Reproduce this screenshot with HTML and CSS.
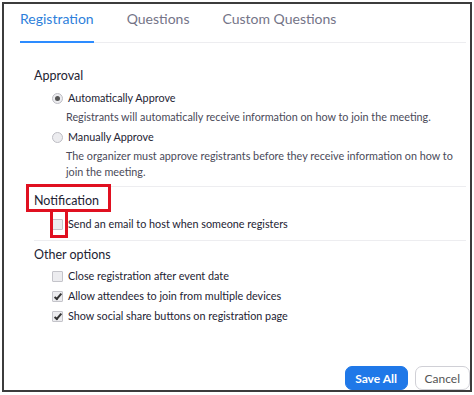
FILE: index.html
```html
<!DOCTYPE html>
<html>
<head>
<meta charset="utf-8">
<link rel="stylesheet" href="styles.css">
</head>
<body>
<div class="frame">
  <div class="tabs">
    <div class="tab active">Registration</div>
    <div class="tab">Questions</div>
    <div class="tab">Custom Questions</div>
  </div>
  <div class="content">
    <div class="group">
      <div class="group-title">Approval</div>
      <div class="option"><span class="radio checked"></span><span>Automatically Approve</span></div>
      <div class="desc">Registrants will automatically receive information on how to join the meeting.</div>
      <div class="option spaced"><span class="radio"></span><span>Manually Approve</span></div>
      <div class="desc">The organizer must approve registrants before they receive information on how to join the meeting.</div>
    </div>
    <div class="group">
      <div class="group-title">Notification</div>
      <div class="option"><span class="check"></span><span>Send an email to host when someone registers</span></div>
    </div>
    <div class="group last">
      <div class="group-title">Other options</div>
      <div class="option"><span class="check"></span><span>Close registration after event date</span></div>
      <div class="option"><span class="check checked"></span><span>Allow attendees to join from multiple devices</span></div>
      <div class="option"><span class="check checked"></span><span>Show social share buttons on registration page</span></div>
    </div>
  </div>
  <div class="footer">
    <button class="btn primary">Save All</button>
    <button class="btn">Cancel</button>
  </div>
  <div class="mark mark-title"></div>
  <div class="mark mark-box"></div>
</div>
</body>
</html>
```
FILE: styles.css
```css
html, body {
  margin: 0;
  padding: 0;
  background: #fff;
}
body {
  font-family: Lato, "Open Sans", sans-serif;
  color: #232333;
}
.frame {
  position: relative;
  box-sizing: border-box;
  margin: 2px 0 0 2px;
  width: 470px;
  height: 390px;
  border: 2px solid #3c3c3c;
  display: flex;
  flex-direction: column;
}
.tabs {
  display: flex;
  margin: 0 4px 0 16px;
  border-bottom: 1px solid #ededf0;
  height: 39px;
  box-sizing: border-box;
}
.tab {
  font-size: 14px;
  color: #747487;
  margin-right: 33px;
  padding-top: 4px;
  box-sizing: border-box;
  height: 39px;
  line-height: 22px;
}
.tab.active {
  color: #2e7fdb;
  border-bottom: 2px solid #2d8cff;
}
.content {
  padding: 0 4px 0 30px;
  margin-top: 24px;
}
.group {
  border-bottom: 1px solid #ededf0;
  padding-bottom: 6px;
  margin-bottom: 5px;
}
.group.last {
  border-bottom: none;
}
.group-title {
  font-size: 12.5px;
  line-height: 18px;
  margin-bottom: 4px;
}
.group:first-child .group-title {
  margin-bottom: 3px;
}
.group.last .group-title {
  margin-bottom: 2px;
}
.option {
  display: flex;
  align-items: center;
  font-size: 10.8px;
  line-height: 20px;
  padding-left: 18px;
}
.option.spaced {
  margin-top: 2px;
}
.desc {
  font-size: 10.8px;
  line-height: 16px;
  color: #4a4a59;
  padding-left: 32px;
  padding-top: 1px;
}
.radio {
  width: 9px;
  height: 9px;
  border-radius: 50%;
  border: 1px solid #bdbdc4;
  background: #ececef;
  margin-right: 5px;
  position: relative;
  flex: none;
}
.radio.checked::after {
  content: "";
  position: absolute;
  left: 2px;
  top: 2px;
  width: 5px;
  height: 5px;
  border-radius: 50%;
  background: #555;
}
.check {
  width: 9px;
  height: 9px;
  border: 1px solid #c4c4ca;
  background: #ececef;
  border-radius: 1px;
  margin-right: 5px;
  position: relative;
  flex: none;
}
.check.checked::after {
  content: "";
  position: absolute;
  left: 3px;
  top: 0px;
  width: 2px;
  height: 6px;
  border: solid #333;
  border-width: 0 2px 2px 0;
  transform: rotate(40deg);
}
.footer {
  margin-top: auto;
  display: flex;
  justify-content: flex-end;
  gap: 7px;
  padding: 0;
}
.btn {
  font-family: Lato, "Open Sans", sans-serif;
  font-size: 12px;
  height: 24px;
  border-radius: 7px;
  border: 1px solid #d0d0d6;
  background: #fff;
  color: #555;
  padding: 0 9px;
  white-space: nowrap;
}
.btn.primary {
  background: #1f78e8;
  border-color: #1f78e8;
  color: #fff;
  font-weight: bold;
  width: 63px;
  padding: 0;
}
.mark {
  position: absolute;
  border: 3px solid #e01020;
  box-sizing: border-box;
}
.mark-title {
  left: 22px;
  top: 180px;
  width: 85px;
  height: 28px;
}
.mark-box {
  left: 46px;
  top: 205px;
  width: 18px;
  height: 29px;
  border-top: none;
}
```
